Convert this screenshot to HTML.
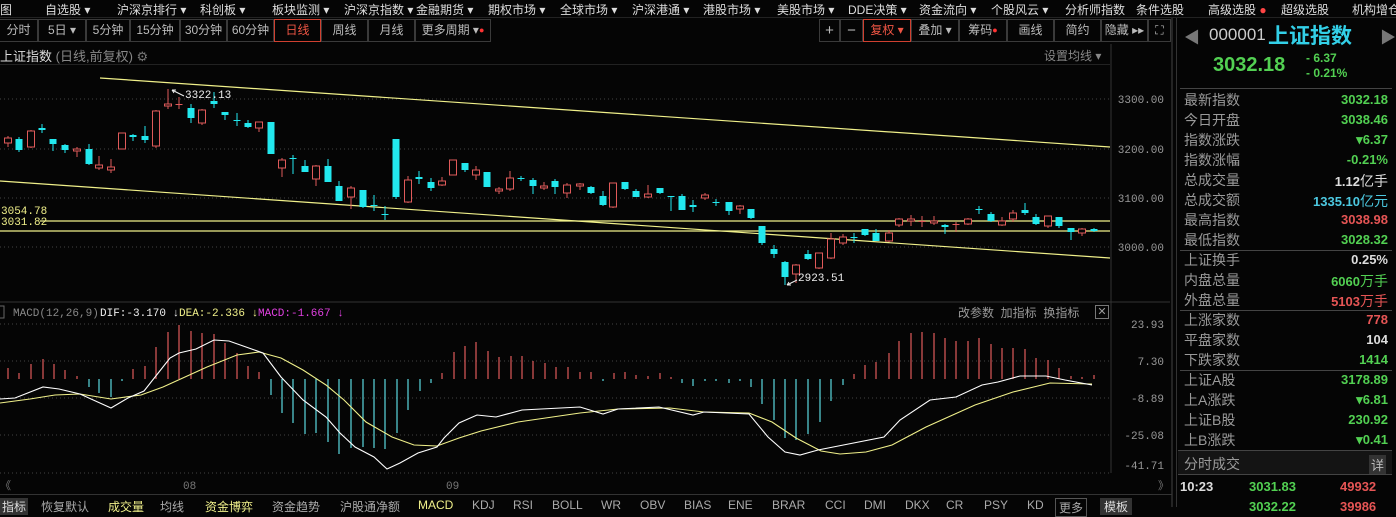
<!DOCTYPE html>
<html><head><meta charset="utf-8">
<style>
*{margin:0;padding:0;box-sizing:border-box}
body{width:1396px;height:507px;background:#050505;overflow:hidden;position:relative;font-family:"Liberation Sans","Noto Sans CJK SC",sans-serif;color:#ccc}
.a{position:absolute;white-space:nowrap}
.menu{font-size:12px;color:#ddd;top:1px}
.tb{position:absolute;top:19px;height:23px;border:1px solid #3a3a3a;font-size:12px;color:#bbb;text-align:center;line-height:21px}
.lab{position:absolute;left:1184px;font-size:14px;color:#9a9a9a}
.val{position:absolute;right:8px;font-size:13px;font-weight:bold;text-align:right;font-family:"Liberation Sans","Noto Sans CJK SC",sans-serif}
.g{color:#52d052}.r{color:#e65555}.w{color:#ddd}.c{color:#4cc8e0}
.sep{position:absolute;left:1180px;width:212px;height:1px;background:#444}
.bt{position:absolute;top:498px;font-size:12px;color:#aaa}
</style></head><body>
<div class="a menu" style="left:0">图</div>
<div class="a menu" style="left:45px">自选股 ▾</div>
<div class="a menu" style="left:117px">沪深京排行 ▾</div>
<div class="a menu" style="left:200px">科创板 ▾</div>
<div class="a menu" style="left:272px">板块监测 ▾</div>
<div class="a menu" style="left:344px">沪深京指数 ▾</div>
<div class="a menu" style="left:416px">金融期货 ▾</div>
<div class="a menu" style="left:488px">期权市场 ▾</div>
<div class="a menu" style="left:560px">全球市场 ▾</div>
<div class="a menu" style="left:632px">沪深港通 ▾</div>
<div class="a menu" style="left:703px">港股市场 ▾</div>
<div class="a menu" style="left:777px">美股市场 ▾</div>
<div class="a menu" style="left:848px">DDE决策 ▾</div>
<div class="a menu" style="left:919px">资金流向 ▾</div>
<div class="a menu" style="left:991px">个股风云 ▾</div>
<div class="a menu" style="left:1065px">分析师指数</div>
<div class="a menu" style="left:1136px">条件选股</div>
<div class="a menu" style="left:1208px">高级选股 <span style="color:#f44">●</span></div>
<div class="a menu" style="left:1281px">超级选股</div>
<div class="a menu" style="left:1352px">机构增仓</div>
<div class="a" style="left:0;top:17px;width:1396px;height:1px;background:#222"></div>
<div class="tb" style="left:-1px;width:39px">分时</div>
<div class="tb" style="left:38px;width:48px">5日 ▾</div>
<div class="tb" style="left:86px;width:44px">5分钟</div>
<div class="tb" style="left:130px;width:50px">15分钟</div>
<div class="tb" style="left:180px;width:47px">30分钟</div>
<div class="tb" style="left:227px;width:47px">60分钟</div>
<div class="tb" style="left:274px;width:47px;border-color:#d04030;color:#e54">日线</div>
<div class="tb" style="left:321px;width:47px">周线</div>
<div class="tb" style="left:368px;width:47px">月线</div>
<div class="tb" style="left:415px;width:76px">更多周期 ▾<span style="color:#f33;font-size:9px;vertical-align:top">●</span></div>
<div class="tb" style="left:819px;width:21px;font-size:15px">+</div>
<div class="tb" style="left:840px;width:23px;font-size:15px">−</div>
<div class="tb" style="left:863px;width:48px;border-color:#d04030;color:#e54">复权 ▾</div>
<div class="tb" style="left:911px;width:48px">叠加 ▾</div>
<div class="tb" style="left:959px;width:48px">筹码<span style="color:#f33;font-size:9px;vertical-align:top">●</span></div>
<div class="tb" style="left:1007px;width:47px">画线</div>
<div class="tb" style="left:1054px;width:47px">简约</div>
<div class="tb" style="left:1101px;width:47px">隐藏 ▸▸</div>
<div class="tb" style="left:1148px;width:23px">⛶</div>
<div class="a" style="left:0;top:46px;font-size:13px;color:#ddd">上证指数 <span style="color:#888">(日线,前复权)</span> <span style="color:#777">⚙</span></div>
<div class="a" style="left:1044px;top:47px;font-size:12px;color:#888">设置均线 ▾</div>
<div class="a" style="left:0;top:64px;width:1110px;height:1px;background:#222"></div>

<svg id="ch" class="a" style="left:0;top:0" width="1176" height="507" xmlns="http://www.w3.org/2000/svg" font-family="Liberation Mono, monospace">
<g stroke="#444" stroke-dasharray="1 3">
<line x1="0" y1="99" x2="1110" y2="99"/><line x1="0" y1="149" x2="1110" y2="149"/><line x1="0" y1="198" x2="1110" y2="198"/><line x1="0" y1="247" x2="1110" y2="247"/>
<line x1="0" y1="324" x2="1110" y2="324"/><line x1="0" y1="361" x2="1110" y2="361"/><line x1="0" y1="398" x2="1110" y2="398"/><line x1="0" y1="435" x2="1110" y2="435"/>
<line x1="0" y1="473" x2="1110" y2="473"/>
</g>
<line x1="1111" y1="44" x2="1111" y2="473" stroke="#333"/>
<line x1="1172" y1="18" x2="1172" y2="507" stroke="#444"/>
<line x1="0" y1="302" x2="1170" y2="302" stroke="#333"/>
<g font-size="11" fill="#999" text-anchor="end">
<text x="1164" y="103">3300.00</text><text x="1164" y="153">3200.00</text><text x="1164" y="202">3100.00</text><text x="1164" y="251">3000.00</text>
<text x="1164" y="328">23.93</text><text x="1164" y="365">7.30</text><text x="1164" y="402">-8.89</text><text x="1164" y="439">-25.08</text><text x="1164" y="469">-41.71</text>
</g>
<g stroke="#f0f08a" stroke-width="1.2" fill="none">
<line x1="100" y1="78" x2="1110" y2="147"/>
<line x1="0" y1="181" x2="1110" y2="258"/>
<line x1="40" y1="221" x2="1110" y2="221"/>
<line x1="0" y1="231" x2="1110" y2="231"/>
</g>
<g font-size="11" fill="#f0f08a"><text x="1" y="214">3054.78</text><text x="1" y="225">3031.82</text></g>
<g id="cd"></g>
<g font-size="11" fill="#eee"><text x="185" y="98">3322.13</text><text x="798" y="281">2923.51</text></g>
<path d="M172 90 L184 96 M172 90 l4 0 M172 90 l2 3" stroke="#eee" fill="none"/>
<path d="M787 285 L797 280 M787 285 l4 0 M787 285 l2 -3" stroke="#eee" fill="none"/>
<rect x="-6" y="306" width="10" height="12" fill="none" stroke="#666"/>
<g font-size="11"><text x="13" y="316" fill="#888">MACD(12,26,9)</text><text x="100" y="316" fill="#eee">DIF:-3.170 ↓</text><text x="179" y="316" fill="#f0f08a">DEA:-2.336 ↓</text><text x="258" y="316" fill="#e040e0">MACD:-1.667 ↓</text></g>
<g id="hb"></g>
<polyline fill="none" stroke="#f0f08a" stroke-width="1.1" points="0,403 30,399 55,395 80,394 111,399 141,395 163,387 185,377 207,367 237,355 259,352 281,358 303,370 326,385 344,400 366,422 392,437 414,445 437,446 459,438 481,431 518,422 580,413 618,409 670,408 704,412 749,413 772,422 796,438 821,451 840,454 866,452 892,445 926,427 975,405 1013,392 1050,383 1092,384"/>
<polyline fill="none" stroke="#fff" stroke-width="1.1" points="0,399 15,398 43,387 59,389 80,394 111,408 128,398 144,391 159,372 170,358 179,353 196,349 214,340 229,341 246,347 263,353 281,377 303,400 326,417 340,433 355,447 374,457 387,469 400,463 418,453 437,447 444,438 459,423 477,415 496,417 522,410 580,407 603,414 618,409 659,407 693,415 704,412 749,414 768,437 785,452 800,455 818,450 884,437 900,420 930,400 956,397 982,385 998,382 1020,376 1046,376 1065,380 1092,385"/>
<g font-size="11" fill="#777"><text x="183" y="489">08</text><text x="446" y="489">09</text><text x="0" y="489">《</text><text x="1158" y="489">》</text></g>
</svg>
<div class="a" style="left:958px;top:304px;font-size:12px;color:#999">改参数 &nbsp;加指标 &nbsp;换指标</div>
<div class="a" style="left:1095px;top:305px;width:14px;height:14px;border:1px solid #777;color:#999;font-size:11px;line-height:12px;text-align:center">✕</div>
<div class="a" style="left:0;top:494px;width:1172px;height:1px;background:#333"></div>
<div class="bt" style="left:0;background:#333;color:#ddd;padding:0 2px">指标</div>
<div class="bt" style="left:41px">恢复默认</div>
<div class="bt" style="left:108px;color:#f0f08a">成交量</div>
<div class="bt" style="left:160px">均线</div>
<div class="bt" style="left:205px;color:#f0f08a">资金博弈</div>
<div class="bt" style="left:272px">资金趋势</div>
<div class="bt" style="left:340px">沪股通净额</div>
<div class="bt" style="left:418px;color:#f0f08a">MACD</div>
<div class="bt" style="left:472px">KDJ</div>
<div class="bt" style="left:513px">RSI</div>
<div class="bt" style="left:552px">BOLL</div>
<div class="bt" style="left:601px">WR</div>
<div class="bt" style="left:640px">OBV</div>
<div class="bt" style="left:684px">BIAS</div>
<div class="bt" style="left:728px">ENE</div>
<div class="bt" style="left:772px">BRAR</div>
<div class="bt" style="left:825px">CCI</div>
<div class="bt" style="left:864px">DMI</div>
<div class="bt" style="left:905px">DKX</div>
<div class="bt" style="left:946px">CR</div>
<div class="bt" style="left:984px">PSY</div>
<div class="bt" style="left:1027px">KD</div>
<div class="bt" style="left:1055px;border:1px solid #555;padding:0 3px">更多</div>
<div class="bt" style="left:1100px;background:#333;color:#ddd;padding:0 4px">模板</div>
<div class="a" style="left:1176px;top:18px;width:220px;height:489px;border-left:1px solid #333"></div>
<div class="a" style="left:1184px;top:24px;font-size:16px;color:#777">◀</div>
<div class="a" style="left:1380px;top:24px;font-size:16px;color:#777">▶</div>
<div class="a" style="left:1209px;top:25px;font-size:17px;color:#ccc">000001</div>
<div class="a" style="left:1268px;top:20px;font-size:21px;font-weight:bold;color:#33d0e8">上证指数</div>
<div class="a g" style="left:1213px;top:54px;font-size:20px;font-weight:bold">3032.18</div>
<div class="a g" style="left:1306px;top:51px;font-size:12px;font-weight:bold">- 6.37</div>
<div class="a g" style="left:1306px;top:66px;font-size:12px;font-weight:bold">- 0.21%</div>
<div class="sep" style="top:88px"></div>
<div class="lab" style="top:90px">最新指数</div><div class="val g" style="top:92px">3032.18</div>
<div class="lab" style="top:110px">今日开盘</div><div class="val g" style="top:112px">3038.46</div>
<div class="lab" style="top:130px">指数涨跌</div><div class="val g" style="top:132px">▾6.37</div>
<div class="lab" style="top:150px">指数涨幅</div><div class="val g" style="top:152px">-0.21%</div>
<div class="lab" style="top:170px">总成交量</div><div class="val w" style="top:171px">1.12<span style="font-weight:normal;font-size:14px">亿手</span></div>
<div class="lab" style="top:190px">总成交额</div><div class="val c" style="top:191px">1335.10<span style="font-weight:normal;font-size:14px">亿元</span></div>
<div class="lab" style="top:210px">最高指数</div><div class="val r" style="top:212px">3038.98</div>
<div class="lab" style="top:230px">最低指数</div><div class="val g" style="top:232px">3028.32</div>
<div class="sep" style="top:250px"></div>
<div class="lab" style="top:250px">上证换手</div><div class="val w" style="top:252px">0.25%</div>
<div class="lab" style="top:270px">内盘总量</div><div class="val g" style="top:271px">6060<span style="font-weight:normal;font-size:14px">万手</span></div>
<div class="lab" style="top:290px">外盘总量</div><div class="val r" style="top:291px">5103<span style="font-weight:normal;font-size:14px">万手</span></div>
<div class="sep" style="top:310px"></div>
<div class="lab" style="top:310px">上涨家数</div><div class="val r" style="top:312px">778</div>
<div class="lab" style="top:330px">平盘家数</div><div class="val w" style="top:332px">104</div>
<div class="lab" style="top:350px">下跌家数</div><div class="val g" style="top:352px">1414</div>
<div class="sep" style="top:370px"></div>
<div class="lab" style="top:370px">上证A股</div><div class="val g" style="top:372px">3178.89</div>
<div class="lab" style="top:390px">上A涨跌</div><div class="val g" style="top:392px">▾6.81</div>
<div class="lab" style="top:410px">上证B股</div><div class="val g" style="top:412px">230.92</div>
<div class="lab" style="top:430px">上B涨跌</div><div class="val g" style="top:432px">▾0.41</div>
<div class="a" style="left:1178px;top:450px;width:214px;height:25px;background:#141414;border-top:1px solid #444;border-bottom:1px solid #444"></div>
<div class="lab" style="top:454px">分时成交</div>
<div class="a" style="left:1369px;top:455px;font-size:13px;color:#bbb;background:#333;padding:0 2px">详</div>
<div class="a w" style="left:1180px;top:479px;font-size:13px;font-weight:bold">10:23</div>
<div class="a g" style="left:1249px;top:479px;font-size:13px;font-weight:bold">3031.83</div>
<div class="a r" style="left:1340px;top:479px;font-size:13px;font-weight:bold">49932</div>
<div class="a g" style="left:1249px;top:499px;font-size:13px;font-weight:bold">3032.22</div>
<div class="a r" style="left:1340px;top:499px;font-size:13px;font-weight:bold">39986</div>
<script>
var C=[[8,138,143,136,147,'r'],[19,139,150,137,152,'c'],[31,131,147,130,148,'r'],[42,128,130,124,133,'c'],[53,139,144,139,151,'c'],[65,145,150,144,153,'c'],[77,149,151,147,157,'r'],[89,149,164,144,165,'c'],[99,165,168,156,170,'r'],[111,167,170,159,173,'r'],[122,133,149,133,149,'r'],[133,135,137,134,141,'c'],[145,136,140,126,143,'c'],[156,111,146,110,148,'r'],[168,104,106,89,109,'r'],[179,104,105,97,109,'r'],[191,108,118,104,123,'c'],[202,110,123,109,125,'r'],[214,101,104,92,108,'c'],[225,112,115,112,120,'c'],[237,120,120,113,126,'c'],[248,123,127,120,128,'c'],[259,122,128,122,132,'r'],[271,122,154,122,154,'c'],[282,160,168,158,177,'r'],[293,158,158,155,174,'c'],[305,166,172,160,172,'c'],[316,166,179,165,186,'r'],[328,166,182,159,182,'c'],[339,186,201,181,201,'c'],[351,188,197,186,209,'r'],[363,190,207,190,208,'c'],[374,205,205,195,211,'c'],[385,214,214,206,220,'c'],[396,139,197,139,199,'c'],[408,180,202,176,203,'r'],[419,177,179,171,184,'c'],[431,182,188,178,191,'c'],[442,181,185,177,186,'r'],[453,160,175,160,175,'r'],[465,163,170,163,172,'c'],[476,170,175,166,180,'r'],[487,172,187,172,187,'c'],[499,189,191,187,194,'r'],[510,178,189,171,191,'r'],[521,178,178,176,181,'c'],[533,180,186,178,194,'c'],[544,186,188,182,190,'r'],[555,181,187,179,194,'c'],[567,185,193,183,198,'r'],[580,184,186,183,190,'r'],[591,187,193,186,194,'c'],[603,196,205,191,206,'c'],[613,183,207,183,208,'r'],[625,182,189,182,190,'c'],[636,191,197,189,197,'c'],[648,194,197,185,198,'r'],[660,188,193,188,194,'c'],[671,196,196,196,211,'c'],[682,196,210,194,210,'c'],[693,205,207,200,212,'c'],[705,195,198,193,200,'r'],[716,202,203,199,206,'c'],[729,202,211,202,215,'c'],[740,206,209,205,214,'r'],[751,209,218,209,219,'c'],[762,226,243,226,245,'c'],[774,249,254,245,258,'c'],[785,262,277,261,285,'c'],[796,265,274,264,283,'r'],[808,254,259,250,260,'c'],[819,253,268,253,269,'r'],[831,239,258,233,259,'r'],[843,237,243,234,245,'r'],[854,237,237,233,243,'c'],[865,229,235,229,236,'c'],[876,233,241,229,241,'c'],[889,233,241,230,242,'r'],[899,219,225,218,227,'r'],[911,219,221,215,226,'r'],[922,221,222,216,227,'r'],[934,221,223,216,225,'r'],[945,225,227,224,234,'c'],[956,224,225,222,232,'r'],[968,219,224,218,225,'r'],[979,209,210,206,214,'c'],[991,214,221,212,222,'c'],[1002,221,225,217,226,'r'],[1013,213,219,210,222,'r'],[1025,210,213,203,215,'c'],[1036,217,224,214,225,'c'],[1048,216,226,216,228,'r'],[1059,217,226,217,228,'c'],[1071,228,232,228,240,'c'],[1082,229,233,228,236,'r'],[1094,229,231,228,232,'c']];
var s='';C.forEach(function(k){var x=k[0],col=k[5]=='r'?'#e05a5a':'#22e8ee';
s+='<line x1="'+x+'" y1="'+k[3]+'" x2="'+x+'" y2="'+k[4]+'" stroke="'+col+'"/>';
var h=Math.max(k[2]-k[1],1);
if(k[5]=='r'&&h>1)s+='<rect x="'+(x-3.5)+'" y="'+k[1]+'" width="7" height="'+h+'" fill="#050505" stroke="'+col+'"/>';
else s+='<rect x="'+(x-3.5)+'" y="'+k[1]+'" width="7" height="'+h+'" fill="'+col+'"/>';});
document.getElementById('cd').innerHTML=s;
var H=[[8,368],[19,373],[31,364],[43,359],[54,364],[65,370],[77,376],[89,387],[99,393],[111,397],[122,381],[133,369],[145,366],[156,347],[168,332],[179,325],[191,331],[202,333],[214,334],[225,343],[237,353],[248,366],[259,372],[271,395],[282,413],[293,423],[305,434],[316,433],[328,442],[339,454],[351,448],[363,447],[374,448],[385,449],[397,433],[408,410],[420,391],[431,383],[442,373],[454,352],[465,346],[476,342],[488,351],[499,357],[511,356],[522,356],[533,361],[545,363],[556,367],[568,367],[580,372],[591,372],[603,381],[614,373],[625,372],[636,375],[648,376],[660,373],[671,377],[682,383],[693,386],[705,381],[716,381],[729,383],[740,381],[751,387],[762,404],[774,420],[785,438],[796,440],[808,434],[820,422],[831,401],[843,385],[854,374],[865,365],[876,362],[889,353],[899,341],[911,333],[922,332],[934,333],[945,338],[956,341],[968,341],[979,338],[991,344],[1002,348],[1013,348],[1025,349],[1036,358],[1048,360],[1059,368],[1071,376],[1082,377],[1094,375]];
var t='';H.forEach(function(k){var y=k[1],up=y<379;t+='<line x1="'+k[0]+'" y1="379" x2="'+k[0]+'" y2="'+y+'" stroke="'+(up?'#e05a5a':'#5ad8e0')+'" stroke-width="1.2"/>';});
document.getElementById('hb').innerHTML=t;
</script>
</body></html>
